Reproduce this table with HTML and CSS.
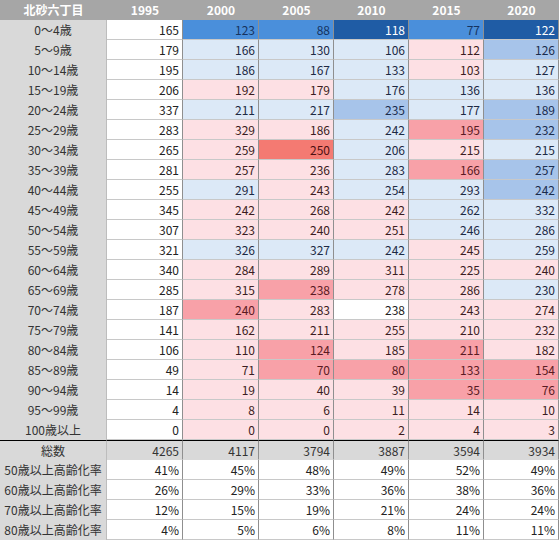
FILE: index.html
```html
<!DOCTYPE html>
<html lang="ja">
<head>
<meta charset="utf-8">
<title>北砂六丁目</title>
<link rel="stylesheet" href="styles.css">
</head>
<body>
<div class="sheet">
  <div class="hd">北砂六丁目</div><div class="hd">1995</div><div class="hd">2000</div><div class="hd">2005</div><div class="hd">2010</div><div class="hd">2015</div><div class="hd">2020</div>

  <div class="lbl">0～4歳</div><div class="n w">165</div><div class="n bm">123</div><div class="n bm">88</div><div class="n bd">118</div><div class="n bm">77</div><div class="n bd">122</div>
  <div class="lbl">5～9歳</div><div class="n w">179</div><div class="n lb">166</div><div class="n lb">130</div><div class="n lb">106</div><div class="n lp">112</div><div class="n mb">126</div>
  <div class="lbl">10～14歳</div><div class="n w">195</div><div class="n lb">186</div><div class="n lb">167</div><div class="n lb">133</div><div class="n lp">103</div><div class="n lb">127</div>
  <div class="lbl">15～19歳</div><div class="n w">206</div><div class="n lp">192</div><div class="n lp">179</div><div class="n lb">176</div><div class="n lb">136</div><div class="n lb">136</div>
  <div class="lbl">20～24歳</div><div class="n w">337</div><div class="n lb">211</div><div class="n lb">217</div><div class="n mb">235</div><div class="n lb">177</div><div class="n mb">189</div>
  <div class="lbl">25～29歳</div><div class="n w">283</div><div class="n lp">329</div><div class="n lp">186</div><div class="n lb">242</div><div class="n mp">195</div><div class="n mb">232</div>
  <div class="lbl">30～34歳</div><div class="n w">265</div><div class="n lp">259</div><div class="n rd">250</div><div class="n lb">206</div><div class="n lp">215</div><div class="n lb">215</div>
  <div class="lbl">35～39歳</div><div class="n w">281</div><div class="n lp">257</div><div class="n lp">236</div><div class="n lb">283</div><div class="n mp">166</div><div class="n mb">257</div>
  <div class="lbl">40～44歳</div><div class="n w">255</div><div class="n lb">291</div><div class="n lp">243</div><div class="n lb">254</div><div class="n lb">293</div><div class="n mb">242</div>
  <div class="lbl">45～49歳</div><div class="n w">345</div><div class="n lp">242</div><div class="n lp">268</div><div class="n lp">242</div><div class="n lb">262</div><div class="n lb">332</div>
  <div class="lbl">50～54歳</div><div class="n w">307</div><div class="n lp">323</div><div class="n lp">240</div><div class="n lp">251</div><div class="n lb">246</div><div class="n lb">286</div>
  <div class="lbl">55～59歳</div><div class="n w">321</div><div class="n lb">326</div><div class="n lb">327</div><div class="n lb">242</div><div class="n lp">245</div><div class="n lb">259</div>
  <div class="lbl">60～64歳</div><div class="n w">340</div><div class="n lp">284</div><div class="n lp">289</div><div class="n lp">311</div><div class="n lp">225</div><div class="n lp">240</div>
  <div class="lbl">65～69歳</div><div class="n w">285</div><div class="n lp">315</div><div class="n mp">238</div><div class="n lp">278</div><div class="n lp">286</div><div class="n lb">230</div>
  <div class="lbl">70～74歳</div><div class="n w">187</div><div class="n mp">240</div><div class="n lp">283</div><div class="n w">238</div><div class="n lp">243</div><div class="n lp">274</div>
  <div class="lbl">75～79歳</div><div class="n w">141</div><div class="n lp">162</div><div class="n lp">211</div><div class="n lp">255</div><div class="n lp">210</div><div class="n lp">232</div>
  <div class="lbl">80～84歳</div><div class="n w">106</div><div class="n lp">110</div><div class="n mp">124</div><div class="n lp">185</div><div class="n mp">211</div><div class="n lp">182</div>
  <div class="lbl">85～89歳</div><div class="n w">49</div><div class="n lp">71</div><div class="n mp">70</div><div class="n mp">80</div><div class="n mp">133</div><div class="n mp">154</div>
  <div class="lbl">90～94歳</div><div class="n w">14</div><div class="n lp">19</div><div class="n lp">40</div><div class="n lp">39</div><div class="n mp">35</div><div class="n mp">76</div>
  <div class="lbl">95～99歳</div><div class="n w">4</div><div class="n lp">8</div><div class="n lp">6</div><div class="n lp">11</div><div class="n lp">14</div><div class="n lp">10</div>
  <div class="lbl">100歳以上</div><div class="n w">0</div><div class="n lp">0</div><div class="n lp">0</div><div class="n lp">2</div><div class="n lp">4</div><div class="n lp">3</div>

  <div class="lbl tot">総数</div><div class="n tot">4265</div><div class="n tot">4117</div><div class="n tot">3794</div><div class="n tot">3887</div><div class="n tot">3594</div><div class="n tot">3934</div>

  <div class="lbl">50歳以上高齢化率</div><div class="n w">41%</div><div class="n w">45%</div><div class="n w">48%</div><div class="n w">49%</div><div class="n w">52%</div><div class="n w">49%</div>
  <div class="lbl">60歳以上高齢化率</div><div class="n w">26%</div><div class="n w">29%</div><div class="n w">33%</div><div class="n w">36%</div><div class="n w">38%</div><div class="n w">36%</div>
  <div class="lbl">70歳以上高齢化率</div><div class="n w">12%</div><div class="n w">15%</div><div class="n w">19%</div><div class="n w">21%</div><div class="n w">24%</div><div class="n w">24%</div>
  <div class="lbl">80歳以上高齢化率</div><div class="n w">4%</div><div class="n w">5%</div><div class="n w">6%</div><div class="n w">8%</div><div class="n w">11%</div><div class="n w">11%</div>
</div>
</body>
</html>
```
FILE: styles.css
```css
html, body {
  margin: 0;
  padding: 0;
  background: #ffffff;
}

.sheet {
  display: grid;
  grid-template-columns: 107px 76px 76px 75px 75px 75px 75px;
  grid-auto-rows: 20px;
  width: 559px;
  font-family: "Noto Sans CJK JP", "Noto Sans", sans-serif;
  font-size: 12px;
  line-height: 19px;
  color: #262626;
}

.sheet > div {
  box-sizing: border-box;
  white-space: nowrap;
  overflow: hidden;
}

.hd {
  background: #a6a6a6;
  color: #ffffff;
  font-weight: bold;
  text-align: center;
  line-height: 20px;
}

.lbl {
  background: #d9d9d9;
  text-align: center;
  color: #333333;
  border-right: 1px solid #bdbdbd;
}

.n {
  text-align: right;
  padding-right: 3px;
  border-bottom: 1px solid #c8c8c8;
  border-right: 1px solid #8f8f8f;
}

.w  { background: #ffffff; color: #222222; }
.lp { background: #fde0e4; color: #3b1d22; }
.lb { background: #dce9f7; color: #1d2a44; }
.mb { background: #a7c4ea; color: #1a2c4d; }
.bm { background: #4a8fdb; color: #16335f; }
.bd { background: #1f5ca5; color: #ffffff; }
.mp { background: #f8a1a8; color: #5a1a22; }
.rd { background: #f47a72; color: #4d1010; }

.tot {
  background: #d9d9d9;
  border-top: 1px solid #000000;
  color: #333333;
}

.n.tot {
  border-bottom: 1px solid #d9d9d9;
}
```
